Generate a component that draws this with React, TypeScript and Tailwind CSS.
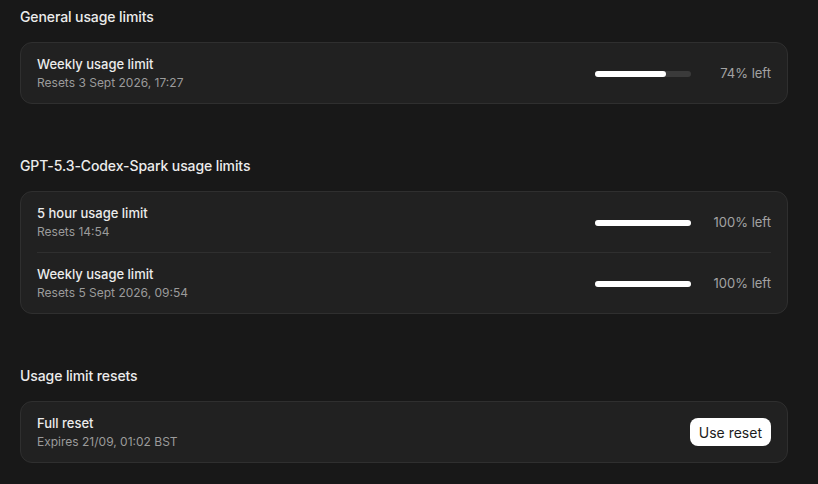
const font = { fontFamily: "Inter, 'Noto Sans', sans-serif" };

type Limit = { title: string; sub: string; pct: number };

function Bar({ pct }: { pct: number }) {
  return (
    <div className="h-[6px] w-[96px] rounded-full bg-[#3a3a3a]">
      <div className="h-full rounded-full bg-white" style={{ width: `${pct}%` }} />
    </div>
  );
}

function Row({ title, sub, children }: { title: string; sub: string; children: React.ReactNode }) {
  return (
    <div className="flex items-center justify-between px-4 py-3">
      <div>
        <div className="text-[13px] font-medium leading-[18px] text-[#ececec]">{title}</div>
        <div className="mt-[2px] text-[12px] leading-[16px] text-[#9b9b9b]">{sub}</div>
      </div>
      {children}
    </div>
  );
}

function LimitRow({ title, sub, pct }: Limit) {
  return (
    <Row title={title} sub={sub}>
      <div className="flex items-center gap-4 pt-[2px]">
        <Bar pct={pct} />
        <span className="w-[64px] text-right text-[13px] text-[#a3a3a3]">{pct}% left</span>
      </div>
    </Row>
  );
}

function Section({ title, className = "", children }: { title: string; className?: string; children: React.ReactNode }) {
  return (
    <section className={className}>
      <h2 className="mb-[15px] text-[14px] font-medium leading-5 tracking-[-0.1px] text-[#ececec]">{title}</h2>
      <div className="rounded-xl border border-[#2f2f2f] bg-[#212121]">{children}</div>
    </section>
  );
}

export default function App() {
  return (
    <div className="min-h-screen bg-[#181818] pl-5 pr-[30px] pt-[7px]" style={font}>
      <Section title="General usage limits">
        <LimitRow title="Weekly usage limit" sub="Resets 3 Sept 2026, 17:27" pct={74} />
      </Section>

      <Section title="GPT-5.3-Codex-Spark usage limits" className="mt-[52px]">
        <LimitRow title="5 hour usage limit" sub="Resets 14:54" pct={100} />
        <div className="mx-4 border-t border-[#2f2f2f]" />
        <LimitRow title="Weekly usage limit" sub="Resets 5 Sept 2026, 09:54" pct={100} />
      </Section>

      <Section title="Usage limit resets" className="mt-[52px]">
        <Row title="Full reset" sub="Expires 21/09, 01:02 BST">
          <button className="h-7 rounded-lg bg-white px-[9px] text-[14px] text-[#1c1c1c]">Use reset</button>
        </Row>
      </Section>
    </div>
  );
}
